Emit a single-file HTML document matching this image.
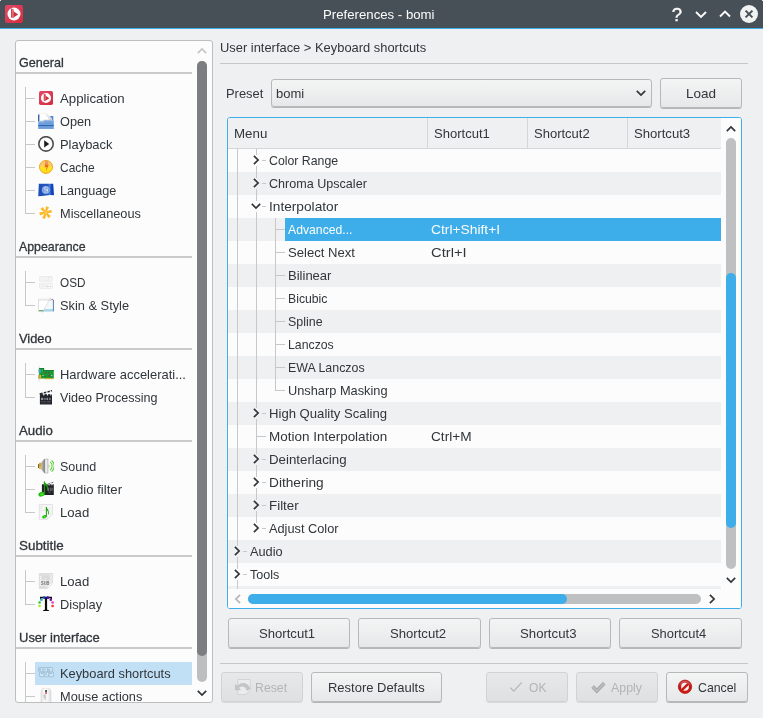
<!DOCTYPE html>
<html><head><meta charset="utf-8"><title>Preferences - bomi</title>
<style>
html,body{margin:0;padding:0}
body{width:763px;height:718px;overflow:hidden;background:#eff0f1;position:relative;font-family:"Liberation Sans",sans-serif;font-size:13px;color:#31363b}
#root{position:absolute;left:0;top:0;width:763px;height:718px;will-change:transform}
.abs{position:absolute}
.t{position:absolute;white-space:nowrap;line-height:16px;height:16px;transform-origin:0 50%}
.h{-webkit-text-stroke:.3px #31363b}
#titlebar{left:0;top:0;width:763px;height:28px;background:#475057}
#titleline{left:0;top:28px;width:763px;height:1px;background:#3daee9}
.panel{background:#fcfcfc;border:1px solid #bcbec0;border-radius:3px;box-sizing:border-box}
.hl{height:2px;background:#c9cacb}
.tl{background:#c6c8c9}
.btn{box-sizing:border-box;border:1px solid #b6b8ba;border-radius:3px;background:linear-gradient(#f3f4f4,#e7e8e9);box-shadow:0 1px 0 rgba(0,0,0,.24)}
.btn.dis{box-shadow:0 1px 0 rgba(0,0,0,.09);border-color:#d0d2d3;background:linear-gradient(#e7e8e9,#dfe0e1)}
.alt{background:#eff0f1}
svg{display:block}
</style></head><body><div id="root">

<div class="abs" id="titlebar"></div><div class="abs" id="titleline"></div>
<div class="t" style="left:323.00px;top:7px;transform:scaleX(1.0157);color:#fcfcfc">Preferences - bomi</div>
<div class="abs" style="left:0;top:0;width:1px;height:1px;background:#e8e9ea"></div><div class="abs" style="left:762px;top:0;width:1px;height:1px;background:#e8e9ea"></div>
<div class="abs" style="left:5px;top:5px"><svg width="18" height="18" viewBox="0 0 18 18"><defs><linearGradient id="bg18" x1="0" y1="0" x2="1" y2="1"><stop offset="0" stop-color="#e4486a"/><stop offset="1" stop-color="#d42c3c"/></linearGradient></defs><rect x="0" y="0" width="18" height="18" rx="2.2" fill="url(#bg18)"/><circle cx="9" cy="9" r="6.5" fill="#fff"/><path d="M6.1 3.3 L8.5 4.4 L8.5 12.9 L6.1 12.6 Z" fill="#c8313f"/><path d="M7.3 4 L8.5 4.4 L8.5 12.9 L7.3 12.7 Z" fill="#e28a94"/><path d="M8.5 6.2 L13.2 9.4 L8.5 12.6 Z" fill="#d02c40"/></svg></div>
<svg class="abs" style="left:664px;top:0" width="99" height="28" viewBox="0 0 99 28" fill="none" stroke="#fcfcfc" stroke-width="1.9">
<text x="13" y="21" font-family="Liberation Sans, sans-serif" font-size="18.5" fill="#fcfcfc" stroke="#fcfcfc" stroke-width=".35" text-anchor="middle">?</text>
<path d="M32 12 L37 17 L42 12"/>
<path d="M56 16.5 L61 11.5 L66 16.5"/>
<circle cx="85" cy="14" r="9" fill="#f1f2f2" stroke="none"/>
<path d="M81.6 10.6 L88.4 17.4 M88.4 10.6 L81.6 17.4" stroke="#475057" stroke-width="2"/>
</svg>
<div class="abs panel" style="left:15px;top:40px;width:198px;height:663px;overflow:hidden">
<div class="t h" style="left:3.00px;top:14px;transform:scaleX(0.9674)">General</div>
<div class="abs hl" style="left:0px;top:31px;width:176px"></div>
<div class="abs tl" style="left:9px;top:46px;width:1px;height:127px"></div>
<div class="abs tl" style="left:9px;top:57px;width:10px;height:1px"></div>
<div class="abs" style="left:22px;top:49px;width:16px;height:16px"><div style="position:absolute;left:1px;top:1px"><svg width="14" height="14" viewBox="0 0 18 18"><defs><linearGradient id="bg14" x1="0" y1="0" x2="1" y2="1"><stop offset="0" stop-color="#e4486a"/><stop offset="1" stop-color="#d42c3c"/></linearGradient></defs><rect x="0" y="0" width="18" height="18" rx="2.2" fill="url(#bg14)"/><circle cx="9" cy="9" r="6.5" fill="#fff"/><path d="M6.1 3.3 L8.5 4.4 L8.5 12.9 L6.1 12.6 Z" fill="#c8313f"/><path d="M7.3 4 L8.5 4.4 L8.5 12.9 L7.3 12.7 Z" fill="#e28a94"/><path d="M8.5 6.2 L13.2 9.4 L8.5 12.6 Z" fill="#d02c40"/></svg></div></div>
<div class="t" style="left:44.00px;top:50px;transform:scaleX(1.0175)">Application</div>
<div class="abs tl" style="left:9px;top:80px;width:10px;height:1px"></div>
<div class="abs" style="left:22px;top:72px;width:16px;height:16px"><svg width="16" height="16" viewBox="0 0 16 16" ><defs><linearGradient id="og" x1="0" y1="0" x2="1" y2="1"><stop offset="0" stop-color="#f2f2f2"/><stop offset="1" stop-color="#cfcfcf"/></linearGradient></defs><path d="M0.1 1.4h1.7v7h-1.7z" fill="#234f9c"/><path d="M11.6 2.9 H15.3 V7.4 H14.4 Z" fill="#4d88d6"/><path d="M1.6 0.4 H8.3 L13.6 5.2 V7.4 H5.7 L5.2 8.3 H1.6 Z" fill="#ffffff" stroke="#e4e4e4" stroke-width=".4"/><path d="M8.3 0.4 L13.6 5.2 V7.2 H11.8 L7.4 1.4 Z" fill="url(#og)"/><path d="M1.8 8.2h3.5l.6-1h7.6" fill="none" stroke="#a0a0a0" stroke-width=".5"/><path d="M0.2 8.5h5.3l.6-1.1h9.7v8.3h-15.6z" fill="#6f9fd9"/><path d="M0.2 8.5h5.3l.6-1.1h9.7v.9h-9.3l-.6 1.1h-5.7z" fill="#94bcea"/><rect x="0.2" y="12" width="15.6" height="1.1" fill="#2e68b4"/><rect x="0.2" y="15.1" width="15.6" height=".6" fill="#6296d6"/></svg></div>
<div class="t" style="left:44.00px;top:73px;transform:scaleX(0.9806)">Open</div>
<div class="abs tl" style="left:9px;top:103px;width:10px;height:1px"></div>
<div class="abs" style="left:22px;top:95px;width:16px;height:16px"><svg width="16" height="16" viewBox="0 0 16 16" ><circle cx="8" cy="7.9" r="7.2" fill="#fdfdfd" stroke="#4d4d4d" stroke-width="1.6"/><path d="M6.2 4.2 L11.2 7.9 L6.2 11.5 Z" fill="#1e1e1e"/></svg></div>
<div class="t" style="left:44.00px;top:96px;transform:scaleX(0.9942)">Playback</div>
<div class="abs tl" style="left:9px;top:126px;width:10px;height:1px"></div>
<div class="abs" style="left:22px;top:118px;width:16px;height:16px"><svg width="16" height="16" viewBox="0 0 16 16" ><defs><linearGradient id="cg" x1="0" y1="0" x2="0" y2="1"><stop offset="0" stop-color="#f9c070"/><stop offset=".42" stop-color="#fbd060"/><stop offset=".6" stop-color="#ffe81c"/><stop offset="1" stop-color="#fbd41e"/></linearGradient></defs><circle cx="8" cy="7.9" r="6.5" fill="url(#cg)" stroke="#f2a324" stroke-width="1"/><path d="M7.7 2.3 L10 2.3 L9.3 5.9 L10.8 5.7 L8.1 12.2 L8.5 8 L6.6 8.5 Z" fill="#e8701a"/><path d="M7.7 2.3 L10 2.3 L9.5 4.8 L7.3 5 Z" fill="#e4a07c"/></svg></div>
<div class="t" style="left:44.00px;top:119px;transform:scaleX(0.9216)">Cache</div>
<div class="abs tl" style="left:9px;top:149px;width:10px;height:1px"></div>
<div class="abs" style="left:22px;top:141px;width:16px;height:16px"><svg width="16" height="16" viewBox="0 0 16 16" ><defs><linearGradient id="lg" x1="0" y1="0" x2="1" y2="0"><stop offset="0" stop-color="#1d4fb4"/><stop offset=".6" stop-color="#2458bf"/><stop offset=".74" stop-color="#4a83dc"/><stop offset=".82" stop-color="#1848b8"/><stop offset="1" stop-color="#0c3cb0"/></linearGradient></defs><path d="M0.8 1.8 L15.2 1.8 Q15.6 7 16 13.3 Q12 12.6 8 13.4 Q4 14.2 0.2 14.2 Q0.6 8 0.8 1.8 Z" fill="url(#lg)"/><g opacity=".9"><circle cx="7.8" cy="7.9" r="3.9" fill="#5d8ade"/><circle cx="7.8" cy="7.9" r="3.5" fill="none" stroke="#a9c3f0" stroke-width=".9"/><path d="M5.6 5.6 h4.4 M5.4 7.8 h4.8 M5.8 10 h4 M7.8 4.6 v6.6 M6.2 5 v5.6 M9.4 5 v5.6" stroke="#c6d8f6" stroke-width=".7" fill="none"/><rect x="8.2" y="7.4" width="1.8" height="1.3" fill="#ffffff"/><rect x="6.3" y="6" width="1.2" height="1" fill="#e4edfb"/></g></svg></div>
<div class="t" style="left:44.00px;top:142px;transform:scaleX(0.975)">Language</div>
<div class="abs tl" style="left:9px;top:172px;width:10px;height:1px"></div>
<div class="abs" style="left:22px;top:164px;width:16px;height:16px"><svg width="16" height="16" viewBox="0 0 16 16" ><path d="M7.76 8.33 L13.89 7.85 L13.24 4.82 L7.44 6.87 Z" fill="#fbb829"/><path d="M7.04 8.10 L10.53 13.17 L12.83 11.10 L8.16 7.10 Z" fill="#fbb829"/><path d="M6.89 7.37 L4.24 12.92 L7.19 13.88 L8.31 7.83 Z" fill="#fbb829"/><path d="M7.44 6.87 L1.31 7.35 L1.96 10.38 L7.76 8.33 Z" fill="#fbb829"/><path d="M8.16 7.10 L4.67 2.03 L2.37 4.10 L7.04 8.10 Z" fill="#fbb829"/><path d="M8.31 7.83 L10.96 2.28 L8.01 1.32 L6.89 7.37 Z" fill="#fbb829"/><circle cx="7.6" cy="7.6" r="1.6" fill="#fcc850"/></svg></div>
<div class="t" style="left:44.00px;top:165px;transform:scaleX(0.9827)">Miscellaneous</div>
<div class="t h" style="left:3.00px;top:198px;transform:scaleX(0.95)">Appearance</div>
<div class="abs hl" style="left:0px;top:215px;width:176px"></div>
<div class="abs tl" style="left:9px;top:230px;width:1px;height:35px"></div>
<div class="abs tl" style="left:9px;top:241px;width:10px;height:1px"></div>
<div class="abs" style="left:22px;top:233px;width:16px;height:16px"><svg width="16" height="16" viewBox="0 0 16 16" ><rect x="1.2" y="2" width="13.5" height="5.8" rx=".8" fill="#ececec"/><rect x="2.3" y="3.2" width="1.2" height="3.6" fill="#f8f8f8"/><rect x="4.6" y="3.2" width="1.6" height="3.6" fill="#f8f8f8"/><rect x="7.2" y="3" width="2.6" height="3.2" fill="#f4f4f4"/><rect x="11" y="4" width="2.4" height="2.8" fill="#f6f6f6"/><rect x="1.5" y="9.3" width="13" height="5.2" rx=".6" fill="#f6f6f6" stroke="#e4e4e4" stroke-width=".6"/><rect x="2.8" y="10.2" width="6" height="3" fill="#f0f0f0"/><rect x="8.8" y="12" width="1.3" height="1" fill="#cfcfcf"/><rect x="11.6" y="12" width="1.3" height="1" fill="#cfcfcf"/><rect x="10.1" y="12.3" width="1.5" height=".5" fill="#e0e0e0"/></svg></div>
<div class="t" style="left:44.00px;top:234px;transform:scaleX(0.9036)">OSD</div>
<div class="abs tl" style="left:9px;top:264px;width:10px;height:1px"></div>
<div class="abs" style="left:22px;top:256px;width:16px;height:16px"><svg width="16" height="16" viewBox="0 0 16 16" ><rect x="0.5" y="2.2" width="15" height="12" fill="#ffffff" stroke="#d2d2d2" stroke-width=".7"/><rect x="0.9" y="2.5" width="14.2" height="1.5" fill="#eeeeee"/><path d="M11.4 2.5 L15.2 2.5 L15.2 14 L5 14 Z" fill="#f7f7f7"/><path d="M6.4 12 L15.2 12 L15.2 14.2 L5.2 14.2 Z" fill="#a9daf1"/><rect x="14.9" y="3" width="1" height="11.3" fill="#4f86b6"/><rect x="11.3" y="2.3" width="2.2" height="1.6" fill="#c4e4f4"/><rect x="13.5" y="2.1" width="1.5" height="1" fill="#e2535a"/><rect x="0.8" y="13.2" width="4.7" height="1" fill="#4e9c50"/><path d="M12.4 0.8 L4.3 15.6" stroke="#b8b8b8" stroke-width=".6" stroke-dasharray="1.4 .8"/></svg></div>
<div class="t" style="left:44.00px;top:257px;transform:scaleX(0.9855)">Skin &amp; Style</div>
<div class="t h" style="left:3.00px;top:290px;transform:scaleX(0.9879)">Video</div>
<div class="abs hl" style="left:0px;top:307px;width:176px"></div>
<div class="abs tl" style="left:9px;top:322px;width:1px;height:35px"></div>
<div class="abs tl" style="left:9px;top:333px;width:10px;height:1px"></div>
<div class="abs" style="left:22px;top:325px;width:16px;height:16px"><svg width="16" height="16" viewBox="0 0 16 16" ><rect x="0.8" y="0" width=".8" height="15.8" fill="#dedede"/><path d="M1.1 1.9 H6.1 V4 H15.8 V12.2 H6.2 V12.5 H1.1 Z" fill="#1b9a32"/><path d="M1.1 1.9 H6.1 V4 H15.8 V5 H5 V2.9 H1.1 Z" fill="#128428"/><rect x="6.2" y="12.1" width="9.4" height="1.1" fill="#bfae22"/><rect x="0.1" y="3.3" width="1.4" height="3.3" fill="#9fb6cc"/><rect x="1.5" y="3.3" width="1.5" height="3.3" fill="#2fa4e4"/><rect x="0.1" y="8.9" width="1.4" height="3.9" fill="#d2a36e"/><rect x="1.5" y="8.9" width="1.5" height="3.9" fill="#e9b41e"/><rect x="6.3" y="5.8" width="2.3" height="1.3" fill="#4e5a56"/><rect x="9.9" y="5.8" width="1.7" height="1.3" fill="#4e5a56"/><rect x="9.6" y="8.8" width="2.5" height="1.8" fill="#525a58"/><rect x="4" y="3.4" width=".8" height="2.4" fill="#3cb84e"/><rect x="4.4" y="9" width="1.2" height=".8" fill="#d8f0dc"/><rect x="12.9" y="9" width="1.6" height=".8" fill="#a8dcb0"/><rect x="6.4" y="10.2" width="1.6" height=".7" fill="#0f7424"/></svg></div>
<div class="t" style="left:44.00px;top:326px;transform:scaleX(0.996)">Hardware accelerati...</div>
<div class="abs tl" style="left:9px;top:356px;width:10px;height:1px"></div>
<div class="abs" style="left:22px;top:348px;width:16px;height:16px"><svg width="16" height="16" viewBox="0 0 16 16" ><g transform="translate(0 0) scale(1.0)"><rect x="1.9" y="5.1" width="12.1" height="10.4" fill="#23252c"/><path d="M5 5.1 l.9 2 l.9 -2 Z M8.6 5.1 l.9 2 l.9 -2 Z M12 5.1 l.9 2 l.9 -2 Z" fill="#f4f4f4"/><path d="M1.5 4.2 L13.8 1 L14.2 2.5 L1.9 5.7 Z" fill="#23252c"/><path d="M4 3.4 l1.6 -.4 l.9 1.5 l-1.6 .4 Z M7.6 2.5 l1.6 -.4 l.9 1.5 l-1.6 .4 Z M11.2 1.6 l1.5 -.4 l.9 1.5 l-1.5 .4 Z" fill="#f4f4f4"/><rect x="3" y="8.8" width="2.3" height="2.2" fill="#8e9096"/><rect x="6.3" y="8.8" width="1.4" height="2.2" fill="#777a80"/><rect x="8.5" y="8.8" width="1.6" height="2.2" fill="#8e9096"/><rect x="11" y="8.8" width="1.8" height="2.2" fill="#6c6f76"/><rect x="3" y="12.4" width="5" height=".6" fill="#5a5d64"/><rect x="9" y="12.4" width="3.6" height=".6" fill="#6a6d74"/><rect x="3" y="13.7" width="9.6" height=".5" fill="#4a4d54"/></g></svg></div>
<div class="t" style="left:44.00px;top:349px;transform:scaleX(0.967)">Video Processing</div>
<div class="t h" style="left:3.00px;top:382px;transform:scaleX(1.0182)">Audio</div>
<div class="abs hl" style="left:0px;top:399px;width:176px"></div>
<div class="abs tl" style="left:9px;top:414px;width:1px;height:58px"></div>
<div class="abs tl" style="left:9px;top:425px;width:10px;height:1px"></div>
<div class="abs" style="left:22px;top:417px;width:16px;height:16px"><svg width="16" height="16" viewBox="0 0 16 16" ><defs><linearGradient id="sg" x1="0" y1="0" x2="1" y2="0"><stop offset="0" stop-color="#c4c4c4"/><stop offset=".48" stop-color="#858585"/><stop offset=".62" stop-color="#e4e4e4"/><stop offset=".9" stop-color="#f2f2f2"/><stop offset="1" stop-color="#a8a8a8"/></linearGradient></defs><rect x="0" y="6.1" width="1.1" height="3.9" fill="#5e5e5e"/><rect x="1" y="4.8" width="2.3" height="6.2" rx=".6" fill="#e8a416"/><rect x="1.6" y="8" width="1.4" height="2.4" fill="#f4d000"/><path d="M3.2 5.2 L6.4 1.1 L10 1.1 L10 15 L6.4 15 L3.2 10.8 Z" fill="url(#sg)" stroke="#9a9a9a" stroke-width=".5"/><path d="M10.6 6.2 A2.2 2.2 0 0 1 10.6 9.8 Z" fill="#86d648"/><path d="M12 3.9 A5 5 0 0 1 12 12.1" fill="none" stroke="#5ed03a" stroke-width="1.1"/><path d="M13.5 2.4 A7 7 0 0 1 13.5 13.6" fill="none" stroke="#56cc34" stroke-width="1.1"/></svg></div>
<div class="t" style="left:44.00px;top:418px;transform:scaleX(0.9639)">Sound</div>
<div class="abs tl" style="left:9px;top:448px;width:10px;height:1px"></div>
<div class="abs" style="left:22px;top:440px;width:16px;height:16px"><svg width="16" height="16" viewBox="0 0 16 16" ><rect x="3.9" y="3.3" width="11.9" height="10.7" fill="#202126"/><path d="M8.6 2.6 L15.8 0.6 L16 1.6 L8.9 3.5 Z" fill="#d0d0d4"/><path d="M10.5 2.2 l1.2 -.3 l.3 .9 l-1.2 .3 Z M13.5 1.4 l1.2 -.3 l.3 .9 l-1.2 .3 Z" fill="#50525a"/><path d="M10.3 3.3 l.8 1.7 l.8 -1.7 Z M13.2 3.3 l.8 1.7 l.8 -1.7 Z" fill="#f0f0f0"/><rect x="9.6" y="6.6" width="1.6" height="3.4" fill="#6a6c74"/><rect x="12.4" y="6.6" width="1.1" height="3.4" fill="#80828a"/><rect x="14.2" y="6.8" width=".9" height="3" fill="#5a5c64"/><rect x="10" y="10.8" width="3" height=".6" fill="#6a6c74"/><ellipse cx="3.6" cy="13.2" rx="3.3" ry="2.2" fill="#22b812" transform="rotate(-18 3.6 13.2)"/><ellipse cx="3.8000000000000003" cy="13.399999999999999" rx="1.65" ry="1.1" fill="#48e828"/><rect x="5.9" y="0.4" width="1" height="12.799999999999999" fill="#1fa012"/><path d="M5.9 0.3 C7.6 2.6 10.6 3.4 10.1 9 L9.1 9.2 C9.6 5.6 8 4.6 6.9 4.2 L5.9 4.2 Z" fill="#1fa012"/></svg></div>
<div class="t" style="left:44.00px;top:441px;transform:scaleX(1.0098)">Audio filter</div>
<div class="abs tl" style="left:9px;top:471px;width:10px;height:1px"></div>
<div class="abs" style="left:22px;top:463px;width:16px;height:16px"><svg width="16" height="16" viewBox="0 0 16 16" ><path d="M1.3 0.5 H14.5 V9.8 L8.9 15.6 H1.3 Z" fill="#f5f5f5" stroke="#d4d4d4" stroke-width=".6"/><path d="M14.5 9.8 L8.9 15.6 L10 11.0 Z" fill="#fdfdfd" stroke="#d4d4d4" stroke-width=".4"/><rect x="2.2" y="2" width="2.6" height=".6" fill="#dddddd"/><rect x="2.2" y="4.1" width="2.4" height=".6" fill="#dddddd"/><rect x="10.4" y="4.1" width="1.8" height=".6" fill="#dddddd"/><rect x="2.2" y="6.1" width="1.8" height=".6" fill="#dddddd"/><rect x="5" y="6.1" width="2" height=".6" fill="#dddddd"/><rect x="10.6" y="6.1" width="1.4" height=".6" fill="#dddddd"/><ellipse cx="6.4" cy="12.7" rx="2.3" ry="1.6" fill="#22b812" transform="rotate(-18 6.4 12.7)"/><ellipse cx="6.6000000000000005" cy="12.899999999999999" rx="1.15" ry="0.8" fill="#48e828"/><rect x="7.9" y="3" width="1" height="9.7" fill="#1fa012"/><path d="M7.9 2.6 C8.6 4.6 11.4 5.2 10.8 10.2 L10 10.2 C10.3 7.6 9.6 6.8 8.9 6.4 L7.9 6.4 Z" fill="#1fa012"/></svg></div>
<div class="t" style="left:44.00px;top:464px;transform:scaleX(1.0111)">Load</div>
<div class="t h" style="left:3.00px;top:497px;transform:scaleX(1.031)">Subtitle</div>
<div class="abs hl" style="left:0px;top:514px;width:176px"></div>
<div class="abs tl" style="left:9px;top:529px;width:1px;height:35px"></div>
<div class="abs tl" style="left:9px;top:540px;width:10px;height:1px"></div>
<div class="abs" style="left:22px;top:532px;width:16px;height:16px"><svg width="16" height="16" viewBox="0 0 16 16" ><path d="M1.3 0.5 H14.5 V9.6 L8.9 15.6 H1.3 Z" fill="#ebebeb" stroke="#cfcfcf" stroke-width=".6"/><path d="M14.5 9.6 L8.9 15.6 L10 10.799999999999999 Z" fill="#fdfdfd" stroke="#cfcfcf" stroke-width=".4"/><rect x="2" y="1.6" width="9.6" height=".7" fill="#cccccc"/><rect x="2" y="3.2" width="1" height=".7" fill="#f8f8f8"/><rect x="3.6" y="3.2" width="8.4" height=".6" fill="#d0d0d0"/><rect x="2" y="4.8" width="1" height=".7" fill="#f8f8f8"/><rect x="3.6" y="4.6" width="8.6" height="2.6" fill="#dadada"/><rect x="6.4" y="5.3" width="1.6" height="1" fill="#f0f0f0"/><rect x="2" y="6.4" width="1" height=".7" fill="#f8f8f8"/><rect x="2" y="8" width="1" height=".7" fill="#f8f8f8"/><text x="3" y="11.6" font-family="Liberation Sans, sans-serif" font-size="4.6" font-weight="bold" fill="#6c6c6c" textLength="8.4" lengthAdjust="spacingAndGlyphs">SUB</text><rect x="3.6" y="2.4" width="8" height=".5" fill="#d8d8d8"/><rect x="3.6" y="4" width="8.4" height=".5" fill="#d4d4d4"/><rect x="2" y="13" width="5.6" height=".6" fill="#d0d0d0"/><rect x="2" y="14.4" width="6" height=".6" fill="#d4d4d4"/></svg></div>
<div class="t" style="left:44.00px;top:533px;transform:scaleX(1.0111)">Load</div>
<div class="abs tl" style="left:9px;top:563px;width:10px;height:1px"></div>
<div class="abs" style="left:22px;top:555px;width:16px;height:16px"><svg width="16" height="16" viewBox="0 0 16 16" ><path d="M2 0.8 H14 V3.3 H13.2 Q13 2.2 11.6 2.2 H9.1 V13.2 Q9.1 14.1 11.1 14.2 V15 H5 V14.2 Q6.9 14.1 6.9 13.2 V2.2 H4.4 Q3 2.2 2.8 3.3 H2 Z" fill="#0c0c0c"/><circle cx="1.6" cy="10" r="1.35" fill="#a2f024"/><circle cx="1.6" cy="6.5" r="1.35" fill="#30c848"/><circle cx="3.4" cy="3.7" r="1.35" fill="#2fb0b4"/><circle cx="6.3" cy="1.7" r="1.35" fill="#1442c4"/><circle cx="9.8" cy="1.7" r="1.35" fill="#4212a4"/><circle cx="12.8" cy="3.7" r="1.35" fill="#7218a2"/><circle cx="14.6" cy="6.5" r="1.35" fill="#e042c2"/><circle cx="14.6" cy="10" r="1.35" fill="#ff3232"/></svg></div>
<div class="t" style="left:44.00px;top:556px;transform:scaleX(0.9881)">Display</div>
<div class="t h" style="left:3.00px;top:589px;transform:scaleX(0.9988)">User interface</div>
<div class="abs hl" style="left:0px;top:606px;width:176px"></div>
<div class="abs tl" style="left:9px;top:621px;width:1px;height:44px"></div>
<div class="abs tl" style="left:9px;top:632px;width:10px;height:1px"></div>
<div class="abs" style="left:19px;top:621px;width:157px;height:23px;background:#c2e0f5"></div>
<div class="abs" style="left:22px;top:624px;width:16px;height:16px"><svg width="16" height="16" viewBox="0 0 16 16" ><g fill="#c9e5f7" stroke="#95b4c8" stroke-width=".7"><rect x="0.5" y="2.5" width="4.7" height="4.4" rx=".7"/><rect x="5.2" y="2.5" width="4.7" height="4.4" rx=".7"/><rect x="9.9" y="2.5" width="4.7" height="4.4" rx=".7"/><rect x="1.5" y="7.2" width="4.7" height="4.5" rx=".7"/><rect x="6.2" y="7.2" width="4.7" height="4.5" rx=".7"/><rect x="10.9" y="7.2" width="4.7" height="4.5" rx=".7"/></g><g fill="#8aa8bc"><rect x="1.4" y="3.6" width="1.2" height="2"/><rect x="6.6" y="3.6" width=".8" height="1.6"/><rect x="10.6" y="4.4" width="1.4" height="1.2"/><rect x="7.6" y="8.6" width="1" height="1.4"/><rect x="3" y="8.2" width="1.6" height=".8"/><rect x="12" y="8.2" width="1.6" height=".8"/></g></svg></div>
<div class="t" style="left:44.00px;top:625px;transform:scaleX(0.9874)">Keyboard shortcuts</div>
<div class="abs tl" style="left:9px;top:655px;width:10px;height:1px"></div>
<div class="abs" style="left:22px;top:647px;width:16px;height:16px"><svg width="16" height="16" viewBox="0 0 16 16" ><defs><linearGradient id="mg" x1="0" y1="0" x2="1" y2="0"><stop offset="0" stop-color="#e2e2e2"/><stop offset=".35" stop-color="#fbfbfb"/><stop offset=".7" stop-color="#f4f4f4"/><stop offset="1" stop-color="#dcdcdc"/></linearGradient></defs><path d="M3.1 16 V4.4 Q3.1 -0.2 8 -0.2 Q12.9 -0.2 12.9 4.4 V16 Z" fill="url(#mg)" stroke="#d4d4d4" stroke-width=".7"/><path d="M5.2 6.6 Q7 5.8 8 7.6 L7.8 12.5 Q5.6 11 5.2 6.6 Z" fill="#c9c9c9"/><rect x="7.1" y="1.9" width="1.9" height="2.7" rx=".5" fill="#484848"/><rect x="7" y="4.7" width="2" height="1.2" rx=".4" fill="#e4565e"/></svg></div>
<div class="t" style="left:44.00px;top:648px;transform:scaleX(0.9817)">Mouse actions</div>
<div class="abs" style="left:181px;top:20px;width:10px;height:621px;border-radius:5px;background:#bdbec0"></div>
<div class="abs" style="left:181px;top:20px;width:10px;height:595px;border-radius:5px;background:#7b7d80"></div>
<svg class="abs" style="left:179px;top:3px" width="14" height="14" viewBox="0 0 14 14" fill="none" stroke="#c4c6c7" stroke-width="1.7"><path d="M2.8 9.1 L7 4.9 L11.2 9.1"/></svg>
<svg class="abs" style="left:179px;top:645px" width="14" height="14" viewBox="0 0 14 14" fill="none" stroke="#31363b" stroke-width="1.7"><path d="M2.8 4.9 L7 9.1 L11.2 4.9"/></svg>
</div>
<div class="t" style="left:220.00px;top:40px;transform:scaleX(0.9922)">User interface &gt; Keyboard shortcuts</div>
<div class="abs" style="left:220px;top:63px;width:528px;height:1px;background:#c5c7c8"></div>
<div class="t" style="left:226.00px;top:86px;transform:scaleX(0.9919)">Preset</div>
<div class="abs btn" style="left:271px;top:79px;width:381px;height:28px"></div>
<div class="t" style="left:276.00px;top:86px;transform:scaleX(1.0)">bomi</div>
<svg class="abs" style="left:634px;top:86px" width="14" height="14" viewBox="0 0 14 14" fill="none" stroke="#31363b" stroke-width="1.7"><path d="M2.8 4.9 L7 9.1 L11.2 4.9"/></svg>
<div class="abs btn" style="left:660px;top:78px;width:82px;height:30px"></div>
<div class="t" style="left:686.00px;top:86px;transform:scaleX(1.037)">Load</div>
<div class="abs" style="left:227px;top:117px;width:515px;height:492px;box-sizing:border-box;border:1px solid #3daee9;border-radius:3px;background:#fcfcfc;overflow:hidden">
<div class="abs" style="left:0;top:0;width:493px;height:30px;background:#eff0f1;border-bottom:1px solid #d5d6d7"></div>
<div class="t" style="left:6.00px;top:8px;transform:scaleX(1.0258)">Menu</div>
<div class="t" style="left:206.00px;top:8px;transform:scaleX(1.0019)">Shortcut1</div>
<div class="t" style="left:306.00px;top:8px;transform:scaleX(1.0)">Shortcut2</div>
<div class="t" style="left:406.00px;top:8px;transform:scaleX(1.0093)">Shortcut3</div>
<div class="abs" style="left:199px;top:0;width:1px;height:30px;background:#d5d6d7"></div>
<div class="abs" style="left:299px;top:0;width:1px;height:30px;background:#d5d6d7"></div>
<div class="abs" style="left:399px;top:0;width:1px;height:30px;background:#d5d6d7"></div>
<div class="abs alt" style="left:0;top:54px;width:493px;height:23px"></div>
<div class="abs alt" style="left:0;top:100px;width:493px;height:23px"></div>
<div class="abs alt" style="left:0;top:146px;width:493px;height:23px"></div>
<div class="abs alt" style="left:0;top:192px;width:493px;height:23px"></div>
<div class="abs alt" style="left:0;top:238px;width:493px;height:23px"></div>
<div class="abs alt" style="left:0;top:284px;width:493px;height:23px"></div>
<div class="abs alt" style="left:0;top:330px;width:493px;height:23px"></div>
<div class="abs alt" style="left:0;top:376px;width:493px;height:23px"></div>
<div class="abs alt" style="left:0;top:422px;width:493px;height:23px"></div>
<div class="abs alt" style="left:0;top:468px;width:493px;height:23px"></div>
<div class="abs tl" style="left:9px;top:31px;width:1px;height:397px"></div>
<div class="abs tl" style="left:9px;top:439px;width:1px;height:12px"></div>
<div class="abs tl" style="left:9px;top:462px;width:1px;height:9px"></div>
<div class="abs tl" style="left:28px;top:31px;width:1px;height:6px"></div>
<div class="abs tl" style="left:28px;top:48px;width:1px;height:12px"></div>
<div class="abs tl" style="left:28px;top:71px;width:1px;height:12px"></div>
<div class="abs tl" style="left:28px;top:94px;width:1px;height:196px"></div>
<div class="abs tl" style="left:28px;top:301px;width:1px;height:35px"></div>
<div class="abs tl" style="left:28px;top:347px;width:1px;height:12px"></div>
<div class="abs tl" style="left:28px;top:370px;width:1px;height:12px"></div>
<div class="abs tl" style="left:28px;top:393px;width:1px;height:12px"></div>
<div class="abs tl" style="left:47px;top:100px;width:1px;height:173px"></div>
<div class="abs tl" style="left:34px;top:42px;width:4px;height:1px"></div>
<svg class="abs" style="left:21px;top:35px" width="14" height="14" viewBox="0 0 14 14" fill="none" stroke="#31363b" stroke-width="1.7"><path d="M4.9 2.8 L9.1 7 L4.9 11.2"/></svg>
<div class="t" style="left:41.00px;top:35px;transform:scaleX(0.9479)">Color Range</div>
<div class="abs tl" style="left:34px;top:65px;width:4px;height:1px"></div>
<svg class="abs" style="left:21px;top:58px" width="14" height="14" viewBox="0 0 14 14" fill="none" stroke="#31363b" stroke-width="1.7"><path d="M4.9 2.8 L9.1 7 L4.9 11.2"/></svg>
<div class="t" style="left:41.00px;top:58px;transform:scaleX(0.9673)">Chroma Upscaler</div>
<div class="abs tl" style="left:34px;top:88px;width:4px;height:1px"></div>
<svg class="abs" style="left:21px;top:81px" width="14" height="14" viewBox="0 0 14 14" fill="none" stroke="#31363b" stroke-width="1.7"><path d="M2.8 4.9 L7 9.1 L11.2 4.9"/></svg>
<div class="t" style="left:41.00px;top:81px;transform:scaleX(1.0523)">Interpolator</div>
<div class="abs" style="left:57px;top:100px;width:436px;height:23px;background:#3daee9"></div>
<div class="abs tl" style="left:47px;top:111px;width:10px;height:1px"></div>
<div class="t" style="left:60.00px;top:104px;transform:scaleX(0.9397);color:#fcfcfc">Advanced...</div>
<div class="t" style="left:203.00px;top:104px;transform:scaleX(1.0625);color:#fcfcfc">Ctrl+Shift+I</div>
<div class="abs tl" style="left:47px;top:134px;width:10px;height:1px"></div>
<div class="t" style="left:60.00px;top:127px;transform:scaleX(1.0077)">Select Next</div>
<div class="t" style="left:203.00px;top:127px;transform:scaleX(1.1333)">Ctrl+I</div>
<div class="abs tl" style="left:47px;top:157px;width:10px;height:1px"></div>
<div class="t" style="left:60.00px;top:150px;transform:scaleX(1.0024)">Bilinear</div>
<div class="abs tl" style="left:47px;top:180px;width:10px;height:1px"></div>
<div class="t" style="left:60.00px;top:173px;transform:scaleX(0.9415)">Bicubic</div>
<div class="abs tl" style="left:47px;top:203px;width:10px;height:1px"></div>
<div class="t" style="left:60.00px;top:196px;transform:scaleX(0.9571)">Spline</div>
<div class="abs tl" style="left:47px;top:226px;width:10px;height:1px"></div>
<div class="t" style="left:60.00px;top:219px;transform:scaleX(0.9447)">Lanczos</div>
<div class="abs tl" style="left:47px;top:249px;width:10px;height:1px"></div>
<div class="t" style="left:60.00px;top:242px;transform:scaleX(0.9519)">EWA Lanczos</div>
<div class="abs tl" style="left:47px;top:272px;width:10px;height:1px"></div>
<div class="t" style="left:60.00px;top:265px;transform:scaleX(0.984)">Unsharp Masking</div>
<div class="abs tl" style="left:34px;top:295px;width:4px;height:1px"></div>
<svg class="abs" style="left:21px;top:288px" width="14" height="14" viewBox="0 0 14 14" fill="none" stroke="#31363b" stroke-width="1.7"><path d="M4.9 2.8 L9.1 7 L4.9 11.2"/></svg>
<div class="t" style="left:41.00px;top:288px;transform:scaleX(1.0087)">High Quality Scaling</div>
<div class="abs tl" style="left:28px;top:318px;width:10px;height:1px"></div>
<div class="t" style="left:41.00px;top:311px;transform:scaleX(1.0363)">Motion Interpolation</div>
<div class="t" style="left:203.00px;top:311px;transform:scaleX(1.05)">Ctrl+M</div>
<div class="abs tl" style="left:34px;top:341px;width:4px;height:1px"></div>
<svg class="abs" style="left:21px;top:334px" width="14" height="14" viewBox="0 0 14 14" fill="none" stroke="#31363b" stroke-width="1.7"><path d="M4.9 2.8 L9.1 7 L4.9 11.2"/></svg>
<div class="t" style="left:41.00px;top:334px;transform:scaleX(1.0216)">Deinterlacing</div>
<div class="abs tl" style="left:34px;top:364px;width:4px;height:1px"></div>
<svg class="abs" style="left:21px;top:357px" width="14" height="14" viewBox="0 0 14 14" fill="none" stroke="#31363b" stroke-width="1.7"><path d="M4.9 2.8 L9.1 7 L4.9 11.2"/></svg>
<div class="t" style="left:41.00px;top:357px;transform:scaleX(1.052)">Dithering</div>
<div class="abs tl" style="left:34px;top:387px;width:4px;height:1px"></div>
<svg class="abs" style="left:21px;top:380px" width="14" height="14" viewBox="0 0 14 14" fill="none" stroke="#31363b" stroke-width="1.7"><path d="M4.9 2.8 L9.1 7 L4.9 11.2"/></svg>
<div class="t" style="left:41.00px;top:380px;transform:scaleX(1.0286)">Filter</div>
<div class="abs tl" style="left:34px;top:410px;width:4px;height:1px"></div>
<svg class="abs" style="left:21px;top:403px" width="14" height="14" viewBox="0 0 14 14" fill="none" stroke="#31363b" stroke-width="1.7"><path d="M4.9 2.8 L9.1 7 L4.9 11.2"/></svg>
<div class="t" style="left:41.00px;top:403px;transform:scaleX(0.9817)">Adjust Color</div>
<div class="abs tl" style="left:15px;top:433px;width:4px;height:1px"></div>
<svg class="abs" style="left:2px;top:426px" width="14" height="14" viewBox="0 0 14 14" fill="none" stroke="#31363b" stroke-width="1.7"><path d="M4.9 2.8 L9.1 7 L4.9 11.2"/></svg>
<div class="t" style="left:22.00px;top:426px;transform:scaleX(0.9818)">Audio</div>
<div class="abs tl" style="left:15px;top:456px;width:4px;height:1px"></div>
<svg class="abs" style="left:2px;top:449px" width="14" height="14" viewBox="0 0 14 14" fill="none" stroke="#31363b" stroke-width="1.7"><path d="M4.9 2.8 L9.1 7 L4.9 11.2"/></svg>
<div class="t" style="left:22.00px;top:449px;transform:scaleX(0.9667)">Tools</div>
<div class="abs" style="left:493px;top:0;width:20px;height:490px;background:#fcfcfc"></div>
<div class="abs" style="left:498px;top:20px;width:10px;height:431px;border-radius:5px;background:#bfc0c2"></div>
<div class="abs" style="left:498px;top:155px;width:10px;height:255px;border-radius:5px;background:#3daee9"></div>
<svg class="abs" style="left:496px;top:3.5px" width="14" height="14" viewBox="0 0 14 14" fill="none" stroke="#31363b" stroke-width="1.7"><path d="M2.8 9.1 L7 4.9 L11.2 9.1"/></svg>
<svg class="abs" style="left:496px;top:455px" width="14" height="14" viewBox="0 0 14 14" fill="none" stroke="#31363b" stroke-width="1.7"><path d="M2.8 4.9 L7 9.1 L11.2 4.9"/></svg>
<div class="abs" style="left:0;top:471px;width:513px;height:21px;background:#fcfcfc"></div>
<div class="abs" style="left:20px;top:476px;width:453px;height:10px;border-radius:5px;background:#bfc0c2"></div>
<div class="abs" style="left:20px;top:476px;width:319px;height:10px;border-radius:5px;background:#3daee9"></div>
<svg class="abs" style="left:3px;top:474px" width="14" height="14" viewBox="0 0 14 14" fill="none" stroke="#b4b6b8" stroke-width="1.7"><path d="M9.1 2.8 L4.9 7 L9.1 11.2"/></svg>
<svg class="abs" style="left:477px;top:474px" width="14" height="14" viewBox="0 0 14 14" fill="none" stroke="#31363b" stroke-width="1.7"><path d="M4.9 2.8 L9.1 7 L4.9 11.2"/></svg>
</div>
<div class="abs btn" style="left:228px;top:618px;width:122px;height:30px"></div>
<div class="t" style="left:259.00px;top:626px;transform:scaleX(1.0093)">Shortcut1</div>
<div class="abs btn" style="left:358px;top:618px;width:123px;height:30px"></div>
<div class="t" style="left:390.00px;top:626px;transform:scaleX(1.0093)">Shortcut2</div>
<div class="abs btn" style="left:489px;top:618px;width:122px;height:30px"></div>
<div class="t" style="left:520.00px;top:626px;transform:scaleX(1.0148)">Shortcut3</div>
<div class="abs btn" style="left:619px;top:618px;width:123px;height:30px"></div>
<div class="t" style="left:651.00px;top:626px;transform:scaleX(0.9909)">Shortcut4</div>
<div class="abs" style="left:220px;top:663px;width:528px;height:1px;background:#c5c7c8"></div>
<div class="abs btn dis" style="left:221px;top:672px;width:82px;height:30px"></div>
<div class="abs" style="left:235px;top:679px;width:16px;height:16px"><svg width="16" height="16" viewBox="0 0 16 16" ><path d="M2.8 0.5 H15.2 V11 L11 15.5 H2.8 Z" fill="#ececed" stroke="#cbcccd" stroke-width=".7"/><path d="M0.3 5.5 V10.8 H5.6 L3.6 8.9 C6 6.4 10.6 6.4 11.8 11.4 L15 9.8 C13 3.6 6 2.6 2.2 7.3 Z" fill="#c4c5c6" stroke="#b4b5b6" stroke-width=".4"/></svg></div>
<div class="t" style="left:255.00px;top:680px;transform:scaleX(0.9455);color:#b2b4b6">Reset</div>
<div class="abs btn" style="left:311px;top:672px;width:131px;height:30px"></div>
<div class="t" style="left:328.00px;top:680px;transform:scaleX(0.9979)">Restore Defaults</div>
<div class="abs btn dis" style="left:486px;top:672px;width:82px;height:30px"></div>
<div class="abs" style="left:508px;top:679px;width:16px;height:16px"><svg width="16" height="16" viewBox="0 0 16 16" ><path d="M2.3 8.7 L5.8 12.2 L13.7 3.4" fill="none" stroke="#b4b6b8" stroke-width="1.2"/></svg></div>
<div class="t" style="left:529.00px;top:680px;transform:scaleX(0.9278);color:#b2b4b6">OK</div>
<div class="abs btn dis" style="left:576px;top:672px;width:82px;height:30px"></div>
<div class="abs" style="left:590px;top:679px;width:16px;height:16px"><svg width="16" height="16" viewBox="0 0 16 16" ><path d="M2.6 7.6 L6.7 12 L14.2 4.2" fill="none" stroke="#9a9b9c" stroke-width="3.6" stroke-linejoin="miter"/><path d="M2.6 7.6 L6.7 12 L14.2 4.2" fill="none" stroke="#b9babb" stroke-width="2.4"/></svg></div>
<div class="t" style="left:611.00px;top:680px;transform:scaleX(0.9545);color:#b2b4b6">Apply</div>
<div class="abs btn" style="left:666px;top:672px;width:82px;height:30px"></div>
<div class="abs" style="left:677px;top:679px;width:16px;height:16px"><svg width="16" height="16" viewBox="0 0 16 16" ><defs><linearGradient id="cc" x1="0" y1="0" x2="0" y2="1"><stop offset="0" stop-color="#cf3a3a"/><stop offset=".5" stop-color="#c21616"/><stop offset="1" stop-color="#d41c0c"/></linearGradient></defs><circle cx="8" cy="7.75" r="6.7" fill="url(#cc)" stroke="#a80e0e" stroke-width=".7"/><circle cx="8" cy="7.75" r="3.9" fill="#f3f1f1"/><path d="M3.7 10.5 L10.8 3.5 L12.6 5.3 L5.5 12.3 Z" fill="#cc1a14"/><path d="M2.4 6.2 A5.8 5.8 0 0 1 13.6 6.2 Q8 3.4 2.4 6.2 Z" fill="#ffffff" opacity=".15"/></svg></div>
<div class="t" style="left:698.00px;top:680px;transform:scaleX(0.9475)">Cancel</div>
</div></body></html>
